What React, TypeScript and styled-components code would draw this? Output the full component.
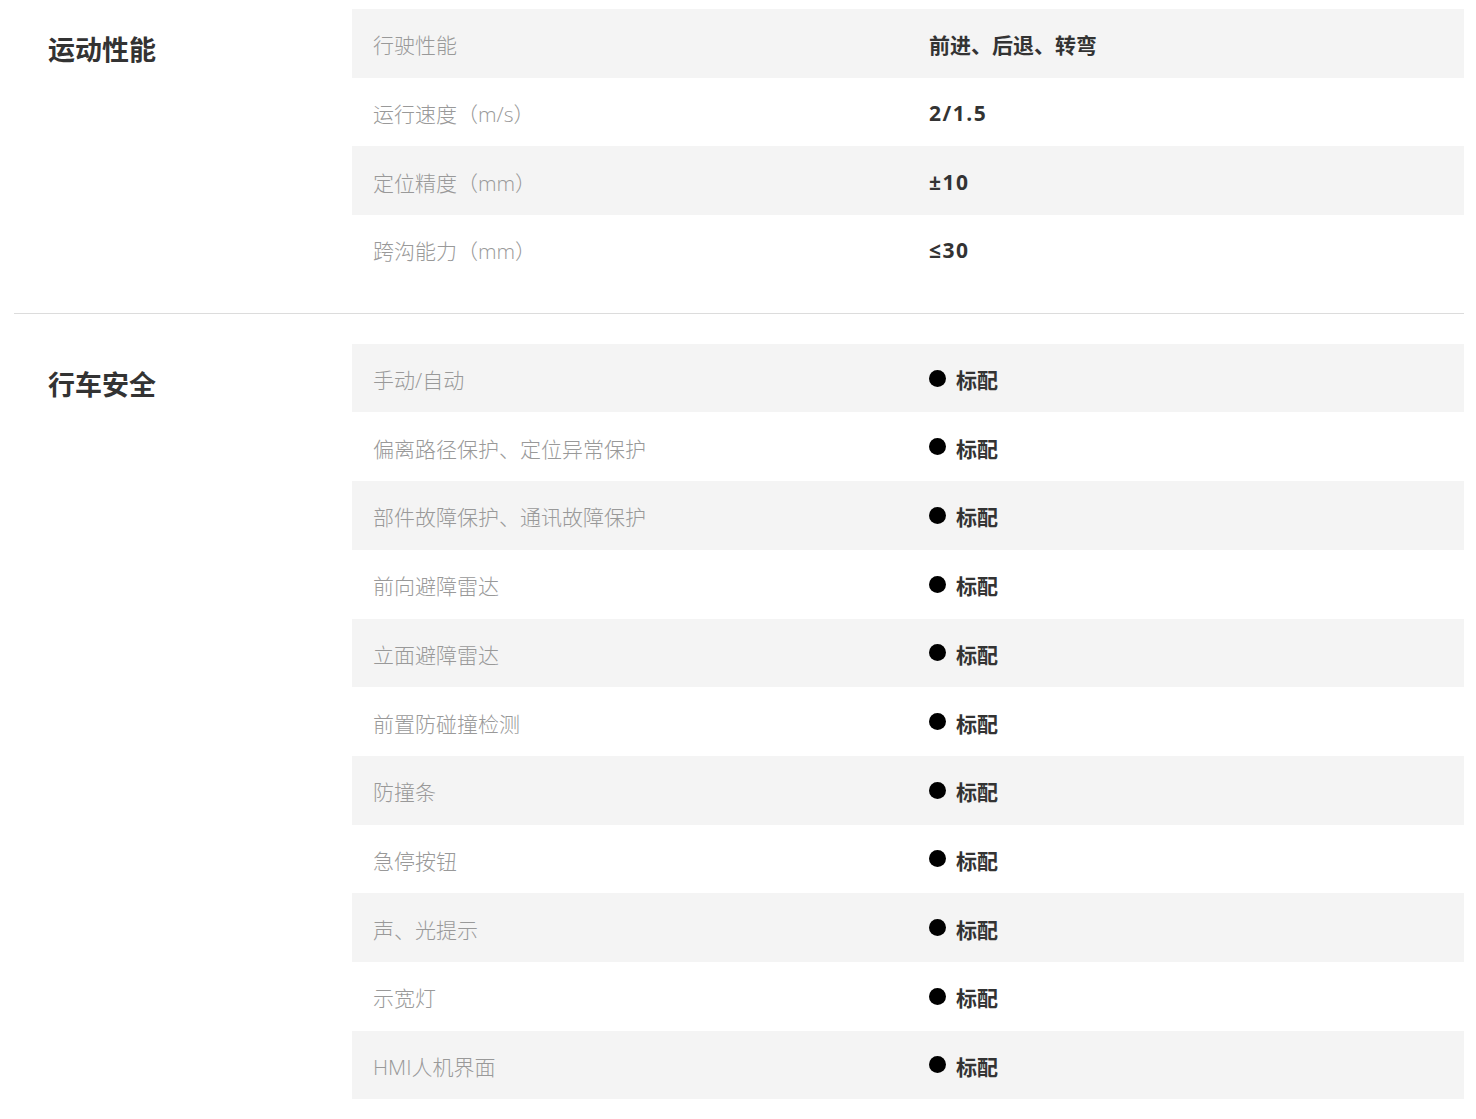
import React from "react";
import styled, { createGlobalStyle } from "styled-components";

const GlobalStyle = createGlobalStyle`
  html, body {
    margin: 0;
    padding: 0;
    background: #fff;
  }
  body {
    font-family: "Open Sans", "Noto Sans CJK SC", sans-serif;
  }
`;

type Row = { label: string; value: string; std?: boolean };

const sections: { title: string; rows: Row[] }[] = [
  {
    title: "运动性能",
    rows: [
      { label: "行驶性能", value: "前进、后退、转弯" },
      { label: "运行速度（m/s）", value: "2/1.5" },
      { label: "定位精度（mm）", value: "±10" },
      { label: "跨沟能力（mm）", value: "≤30" },
    ],
  },
  {
    title: "行车安全",
    rows: [
      { label: "手动/自动", value: "标配", std: true },
      { label: "偏离路径保护、定位异常保护", value: "标配", std: true },
      { label: "部件故障保护、通讯故障保护", value: "标配", std: true },
      { label: "前向避障雷达", value: "标配", std: true },
      { label: "立面避障雷达", value: "标配", std: true },
      { label: "前置防碰撞检测", value: "标配", std: true },
      { label: "防撞条", value: "标配", std: true },
      { label: "急停按钮", value: "标配", std: true },
      { label: "声、光提示", value: "标配", std: true },
      { label: "示宽灯", value: "标配", std: true },
      { label: "HMI人机界面", value: "标配", std: true },
    ],
  },
];

// values written only with latin glyphs are spaced a little wider
const isLatin = (s: string) => !/[\u3000-\u9fff]/.test(s);

const Page = styled.div`
  padding: 0 12px 18px 14px;
`;

const Section = styled.section<{ $first?: boolean }>`
  display: flex;
  padding: ${(p) => (p.$first ? "9px" : "30px")} 0 29px;
  border-bottom: ${(p) => (p.$first ? "1px solid #dcdcdc" : "none")};
`;

const Title = styled.h2`
  width: 338px;
  flex-shrink: 0;
  margin: 0;
  padding: 21px 0 0 34px;
  box-sizing: border-box;
  font-size: 27px;
  line-height: 39px;
  font-weight: 700;
  color: #333;
`;

const Table = styled.div`
  flex: 1;
  display: flex;
  flex-direction: column;
`;

const TableRow = styled.div<{ $odd: boolean }>`
  display: grid;
  grid-template-columns: 1fr 1fr;
  align-items: center;
  height: 68.7px;
  background: ${(p) => (p.$odd ? "#f4f4f4" : "#fff")};
`;

const Label = styled.div`
  padding-left: 21px;
  padding-top: 2px;
  font-size: 21px;
  color: #999;
  font-weight: 300;
`;

const Value = styled.div<{ $latin: boolean }>`
  display: flex;
  align-items: center;
  padding-left: 21px;
  padding-top: 2px;
  font-size: 21px;
  font-weight: 700;
  color: #333;
  letter-spacing: ${(p) => (p.$latin ? "1.5px" : "0")};
`;

const Dot = styled.span`
  width: 17px;
  height: 17px;
  border-radius: 50%;
  background: #000;
  margin-right: 10px;
  margin-top: -2px;
`;

export default function App() {
  return (
    <>
      <GlobalStyle />
      <Page>
        {sections.map((s, si) => (
          <Section key={s.title} $first={si === 0}>
            <Title>{s.title}</Title>
            <Table>
              {s.rows.map((r, i) => (
                <TableRow key={r.label} $odd={i % 2 === 0}>
                  <Label>{r.label}</Label>
                  <Value $latin={isLatin(r.value)}>
                    {r.std && <Dot />}
                    {r.value}
                  </Value>
                </TableRow>
              ))}
            </Table>
          </Section>
        ))}
      </Page>
    </>
  );
}
